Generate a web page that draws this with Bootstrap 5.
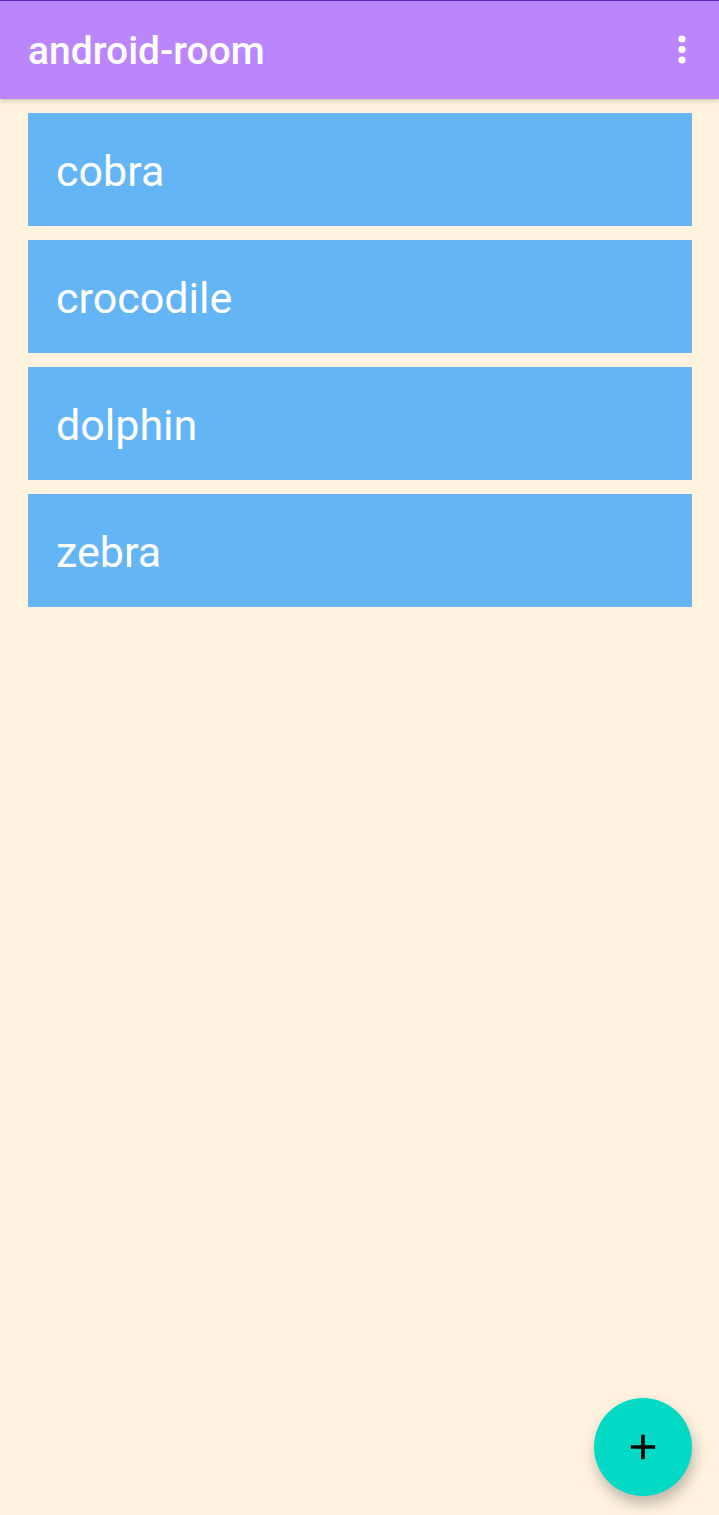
<!DOCTYPE html>
<html lang="en">
<head>
<meta charset="utf-8">
<meta name="viewport" content="width=device-width, initial-scale=1">
<title>android-room</title>
<link href="https://cdn.jsdelivr.net/npm/bootstrap@5.3.0/dist/css/bootstrap.min.css" rel="stylesheet">
<style>
body { background: #fff2df; font-family: Roboto, sans-serif; }
.app-bar { background: #bb86fc; border-top: 1px solid #5827b8; padding: 26px 27px 23px 28px; box-shadow: 0 1px 5px rgba(0,0,0,.25); }
.app-title { font-size: 39px; line-height: 49px; font-weight: 500; color: #fff; }
.menu-btn { width: 20px; height: 44px; }
.word-list { padding: 14px 27px 14px 28px; gap: 14px; }
.word { background: #64b5f6; color: #fff; font-size: 43px; line-height: 57px; padding: 30px 28px 26px; }
.fab { right: 27px; bottom: 19px; width: 98px; height: 98px; background: #03dac5; box-shadow: 2px 8px 14px rgba(0,0,0,.25); }
.fab:hover, .fab:focus { background: #03dac5; }
</style>
</head>
<body class="min-vh-100">
<header class="app-bar d-flex align-items-start justify-content-between">
  <h1 class="app-title m-0">android-room</h1>
  <button type="button" class="menu-btn btn p-0 border-0 d-flex align-items-center justify-content-center" aria-label="More options">
    <svg width="8" height="30" viewBox="0 0 8 30" fill="#fff" aria-hidden="true"><circle cx="4" cy="5" r="3.6"/><circle cx="4" cy="15.5" r="3.6"/><circle cx="4" cy="26" r="3.6"/></svg>
  </button>
</header>
<main>
  <ul class="word-list list-unstyled d-flex flex-column m-0">
    <li class="word">cobra</li>
    <li class="word">crocodile</li>
    <li class="word">dolphin</li>
    <li class="word">zebra</li>
  </ul>
</main>
<button type="button" class="fab btn rounded-circle border-0 p-0 position-fixed d-flex align-items-center justify-content-center" aria-label="Add word">
  <svg width="26" height="26" viewBox="0 0 26 26" aria-hidden="true"><path d="M11.2.8h3.6v10.4h10.4v3.6H14.8v10.4h-3.6V14.8H.8v-3.6h10.4z" fill="#000"/></svg>
</button>
<script src="https://cdn.jsdelivr.net/npm/bootstrap@5.3.0/dist/js/bootstrap.bundle.min.js"></script>
</body>
</html>
